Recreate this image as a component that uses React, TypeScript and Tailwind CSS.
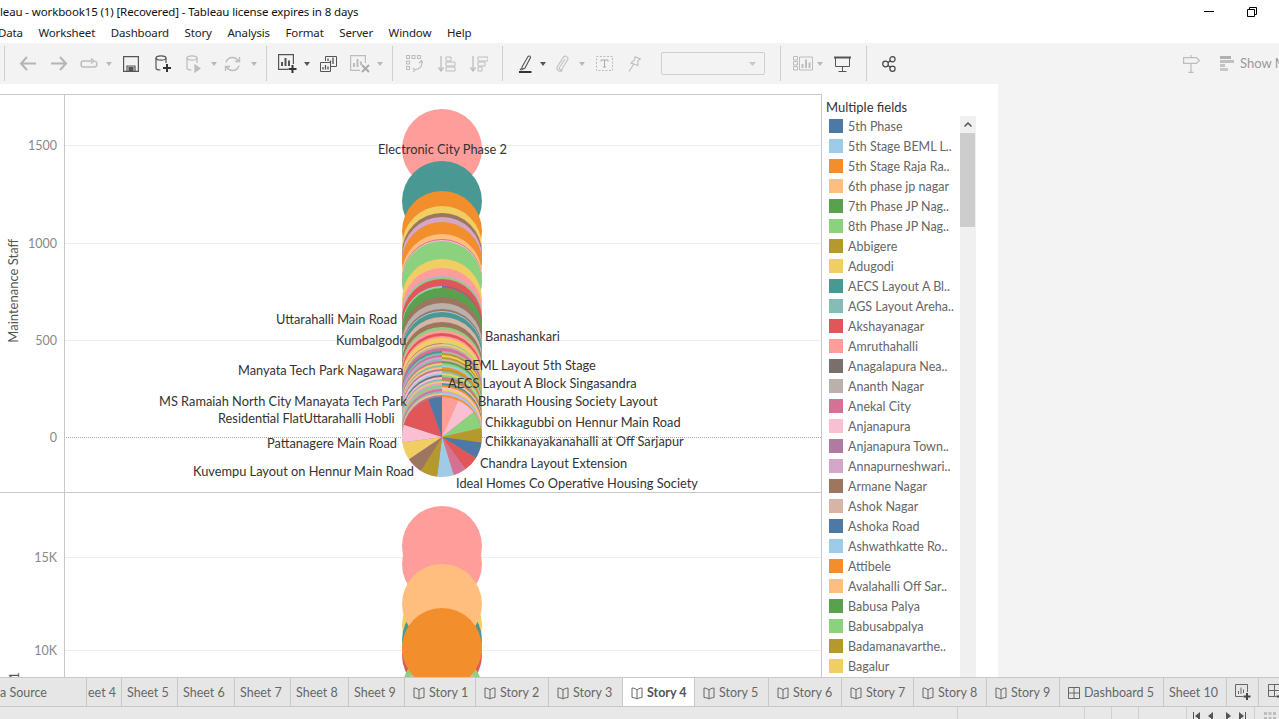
const legend = [
  ["5th Phase", "bg-[#4e79a7]"],
  ["5th Stage BEML L..", "bg-[#a0cbe8]"],
  ["5th Stage Raja Ra..", "bg-[#f28e2b]"],
  ["6th phase jp nagar", "bg-[#ffbe7d]"],
  ["7th Phase JP Nag..", "bg-[#59a14f]"],
  ["8th Phase JP Nag..", "bg-[#8cd17d]"],
  ["Abbigere", "bg-[#b6992d]"],
  ["Adugodi", "bg-[#f1ce63]"],
  ["AECS Layout A Bl..", "bg-[#499894]"],
  ["AGS Layout Areha..", "bg-[#86bcb6]"],
  ["Akshayanagar", "bg-[#e15759]"],
  ["Amruthahalli", "bg-[#ff9d9a]"],
  ["Anagalapura Nea..", "bg-[#79706e]"],
  ["Ananth Nagar", "bg-[#bab0ac]"],
  ["Anekal City", "bg-[#d37295]"],
  ["Anjanapura", "bg-[#fabfd2]"],
  ["Anjanapura Town..", "bg-[#b07aa1]"],
  ["Annapurneshwari..", "bg-[#d4a6c8]"],
  ["Armane Nagar", "bg-[#9d7660]"],
  ["Ashok Nagar", "bg-[#d7b5a6]"],
  ["Ashoka Road", "bg-[#4e79a7]"],
  ["Ashwathkatte Ro..", "bg-[#a0cbe8]"],
  ["Attibele", "bg-[#f28e2b]"],
  ["Avalahalli Off Sar..", "bg-[#ffbe7d]"],
  ["Babusa Palya", "bg-[#59a14f]"],
  ["Babusabpalya", "bg-[#8cd17d]"],
  ["Badamanavarthe..", "bg-[#b6992d]"],
  ["Bagalur", "bg-[#f1ce63]"],
];

const menus = ["Data", "Worksheet", "Dashboard", "Story", "Analysis", "Format", "Server", "Window", "Help"];

const labels = [
  ["Electronic City Phase 2", "left-[378px] top-[46px]"],
  ["Uttarahalli Main Road", "left-[276px] top-[216px]"],
  ["Kumbalgodu", "left-[336px] top-[237px]"],
  ["Banashankari", "left-[485px] top-[233px]"],
  ["BEML Layout 5th Stage", "left-[464px] top-[262px]"],
  ["Manyata Tech Park Nagawara", "left-[238px] top-[267px]"],
  ["AECS Layout A Block Singasandra", "left-[448px] top-[280px]"],
  ["Bharath Housing Society Layout", "left-[478px] top-[298px]"],
  ["MS Ramaiah North City Manayata Tech Park", "left-[159px] top-[298px]"],
  ["Residential FlatUttarahalli Hobli", "left-[218px] top-[315px]"],
  ["Chikkagubbi on Hennur Main Road", "left-[485px] top-[319px]"],
  ["Chikkanayakanahalli at Off Sarjapur", "left-[485px] top-[338px]"],
  ["Pattanagere Main Road", "left-[267px] top-[340px]"],
  ["Chandra Layout Extension", "left-[480px] top-[360px]"],
  ["Kuvempu Layout on Hennur Main Road", "left-[193px] top-[368px]"],
  ["Ideal Homes Co Operative Housing Society", "left-[456px] top-[380px]"],
];

const C = {
  blue: "#4e79a7", sky: "#a0cbe8", orange: "#f28e2b", peach: "#ffbe7d", green: "#59a14f", lime: "#8cd17d",
  olive: "#b6992d", yellow: "#f1ce63", teal: "#499894", aqua: "#86bcb6", red: "#e15759", pink: "#ff9d9a",
  grey: "#79706e", stone: "#bab0ac", mauve: "#d37295", rose: "#fabfd2", plum: "#b07aa1", lilac: "#d4a6c8",
  brown: "#9d7660", tan: "#d7b5a6",
};

// top edge of each bubble, left half colour, right half colour
const pile: [number, string, string?][] = [
  [109, C.pink], [161, C.teal], [191, C.orange], [206, C.yellow], [213, C.brown], [217, C.lilac],
  [222, C.orange], [234, C.peach], [239, C.mauve], [240, C.rose], [241, C.lime], [259, C.yellow],
  [268, C.pink], [275, C.lilac], [277, C.lime], [279, C.red], [284, C.red, C.red], [286, C.sky, C.blue],
  [287, C.lime, C.red], [288, C.green], [297, C.brown], [303, C.stone], [309, C.brown], [311, C.sky],
  [312, C.teal], [317, C.tan], [322, C.brown], [327, C.lime], [330, C.pink], [333, C.red], [336, C.pink],
  [338, C.yellow], [343, C.plum, C.aqua], [344, C.yellow], [346, C.stone], [348, C.mauve], [351, C.teal, C.stone],
  [353, C.aqua, C.olive], [355, C.mauve, C.yellow], [357, C.lilac, C.olive], [359, C.aqua, C.tan], [361, C.mauve, C.green],
  [363, C.yellow, C.lime], [365, C.aqua, C.sky], [367, C.peach, C.orange], [369, C.plum, C.olive], [371, C.rose, C.aqua],
  [373, C.sky, C.yellow], [375, C.grey, C.lime], [377, C.rose, C.mauve], [379, C.aqua, C.olive], [381, C.peach, C.rose],
  [383, C.lilac, C.teal], [385, C.lime, C.orange], [387, C.stone, C.rose], [389, C.mauve, C.yellow], [391, C.aqua, C.lilac],
  [393, C.peach, C.sky], [395, C.plum, C.orange],
];

// final pie, degrees clockwise from 12 o'clock
const slices: [number, number, string][] = [
  [0, 24, C.pink], [24, 52, C.rose], [52, 77, C.lime], [77, 98, C.olive], [98, 122, C.blue], [122, 144, C.red],
  [144, 163, C.mauve], [163, 187, C.sky], [187, 212, C.olive], [212, 236, C.brown], [236, 262, C.yellow],
  [262, 288, C.rose], [288, 340, C.red], [340, 360, C.blue],
];

const pt = (cy: number, deg: number) => {
  const r = (deg * Math.PI) / 180;
  return `${442 + 40 * Math.sin(r)} ${cy - 40 * Math.cos(r)}`;
};

function TopPile() {
  return (
    <svg className="absolute left-0 top-0" width="822" height="397" viewBox="0 95 822 397">
      {pile.map(([top, left, right], i) => {
        const cy = top + 40;
        if (!right || right === left) return <circle key={i} cx="442" cy={cy} r="40" fill={left} />;
        return (
          <g key={i}>
            <path d={`M442 ${cy - 40}A40 40 0 0 0 442 ${cy + 40}Z`} fill={left} />
            <path d={`M442 ${cy - 40}A40 40 0 0 1 442 ${cy + 40}Z`} fill={right} />
          </g>
        );
      })}
      {slices.map(([a, b, c], i) => (
        <path key={i} d={`M442 437L${pt(437, a)}A40 40 0 0 1 ${pt(437, b)}Z`} fill={c} />
      ))}
    </svg>
  );
}

function BottomPile() {
  const circles: [number, string][] = [
    [546, C.pink], [564, C.pink], [625, C.yellow], [640, C.teal], [655, C.red], [690, C.lime], [700, C.tan],
    [604, C.peach], [648, C.orange],
  ];
  return (
    <svg className="absolute left-0 top-0" width="822" height="184" viewBox="0 493 822 184">
      {circles.map(([cy, c], i) => (
        <circle key={i} cx="442" cy={cy} r="40" fill={c} />
      ))}
    </svg>
  );
}

function Sep({ className }: { className: string }) {
  return <div className={`h-[35px] w-px shrink-0 bg-[#cfcfcf] ${className}`} />;
}

function Caret({ className, dark }: { className: string; dark?: boolean }) {
  return (
    <svg className={`shrink-0 ${className}`} width="6" height="4" viewBox="0 0 6 4">
      <path d="M0 0H6L3 4Z" fill={dark ? "#555" : "#b9b9b9"} />
    </svg>
  );
}

function Book() {
  return (
    <svg className="shrink-0" width="12" height="13" viewBox="0 0 12 13" fill="none" stroke="#666" strokeWidth="1">
      <path d="M6 3C5 1.8 3 1.2 1 1V10.5C3 10.7 5 11 6 12C7 11 9 10.7 11 10.5V1C9 1.2 7 1.8 6 3ZM6 3V12" />
    </svg>
  );
}

function DashIcon() {
  return (
    <svg className="shrink-0" width="12" height="12" viewBox="0 0 12 12" fill="none" stroke="#666" strokeWidth="1">
      <path d="M.5.5H11.5V11.5H.5ZM6 .5V11.5M.5 6H11.5" />
    </svg>
  );
}

function Tab({ w, label, kind, active, pad }: { w: string; label: string; kind?: "story" | "dash"; active?: boolean; pad?: string }) {
  return (
    <div
      className={`flex h-full shrink-0 items-center gap-[4px] overflow-hidden whitespace-nowrap border-r border-[#c8c8c8] pt-[2px] text-[12.5px] ${w} ${
        active ? "bg-white font-bold text-[#555]" : "text-[#666]"
      } ${pad ?? (kind ? "pl-[8px]" : "pl-[5px]")}`}
    >
      {kind === "story" && <Book />}
      {kind === "dash" && <DashIcon />}
      <span>{label}</span>
    </div>
  );
}

export default function App() {
  return (
    <div className="flex h-[719px] w-[1279px] flex-col overflow-hidden bg-white font-['Lato',sans-serif] text-[12px]">
      {/* title bar */}
      <div className="flex h-[21px] shrink-0 items-center pt-[2px] font-['Noto_Sans',sans-serif] text-[#111]">
        <span className="text-[11.5px] tracking-[-0.13px]">leau - workbook15 (1) [Recovered] - Tableau license expires in 8 days</span>
        <div className="ml-auto mr-[22px] flex items-center gap-[33px]">
          <div className="h-px w-[10px] bg-black" />
          <svg width="10" height="10" viewBox="0 0 10 10" fill="none" stroke="#000">
            <path d="M.5 2.5H7.5V9.5H.5ZM2.5 2.5V.5H9.5V7.5H7.5" />
          </svg>
        </div>
      </div>

      {/* menu bar */}
      <div className="-ml-[2px] flex h-[22px] shrink-0 items-center gap-[15.6px] pt-[2px] font-['Noto_Sans',sans-serif] text-[11.5px] text-[#222]">
        {menus.map((m) => (
          <span key={m} className="tracking-[-0.15px]">{m}</span>
        ))}
      </div>

      {/* toolbar */}
      <div className="flex h-[41px] shrink-0 items-center overflow-hidden bg-[#f3f3f3]">
        <Sep className="ml-[4px]" />
        <svg className="ml-[14px] shrink-0" width="17" height="15" viewBox="0 0 17 15" fill="none" stroke="#b5b5b5" strokeWidth="2">
          <path d="M17 7.5H2M8 1L2 7.5L8 14" />
        </svg>
        <svg className="ml-[15px] shrink-0" width="17" height="15" viewBox="0 0 17 15" fill="none" stroke="#b5b5b5" strokeWidth="2">
          <path d="M0 7.5H15M9 1L15 7.5L9 14" />
        </svg>
        <svg className="ml-[12px] shrink-0" width="18" height="12" viewBox="0 0 18 12" fill="none" stroke="#bdbdbd" strokeWidth="1.5">
          <path d="M12 3H3C1.5 3 1 4 1 6S1.5 9 3 9H14C16 9 17 8 17 6S16 3.5 15 3.2M11 .5L14 3L11 5.5" />
        </svg>
        <Caret className="ml-[8px]" />
        <svg className="ml-[11px] shrink-0" width="16" height="16" viewBox="0 0 16 16" fill="none" stroke="#555" strokeWidth="1.2">
          <path d="M.6.6H15.4V15.4H.6ZM4 15V10H12V15" />
          <rect x="6" y="11.5" width="4" height="3.5" fill="#555" />
        </svg>
        <svg className="ml-[16px] shrink-0" width="17" height="18" viewBox="0 0 17 18" fill="none" stroke="#555" strokeWidth="1.2">
          <ellipse cx="6" cy="3" rx="5" ry="2.2" />
          <path d="M1 3V13C1 14.5 3 15 5.5 15M11 3V8" />
          <path d="M12 9V17M8 13H16" stroke="#333" strokeWidth="2" />
        </svg>
        <svg className="ml-[14px] shrink-0" width="15" height="18" viewBox="0 0 15 18" fill="none" stroke="#bdbdbd" strokeWidth="1.2">
          <ellipse cx="6" cy="3" rx="5" ry="2.2" />
          <path d="M1 3V13C1 14.5 3 15 5.5 15M11 3V8" />
          <path d="M9 10L14 13.5L9 17Z" fill="#bdbdbd" />
        </svg>
        <Caret className="ml-[10px]" />
        <svg className="ml-[7px] shrink-0" width="17" height="16" viewBox="0 0 17 16" fill="none" stroke="#bdbdbd" strokeWidth="1.4">
          <path d="M2 6.5C3 3 5.5 1.5 8.5 1.5C11 1.5 13 2.8 14.5 5M15 9.5C14 13 11.5 14.5 8.5 14.5C6 14.5 4 13.2 2.5 11M15.5 1V5.5H11M1.5 15V10.5H6" />
        </svg>
        <Caret className="ml-[10px]" />
        <Sep className="ml-[9px]" />
        <svg className="ml-[11px] shrink-0" width="19" height="19" viewBox="0 0 19 19" fill="none" stroke="#555" strokeWidth="1.2">
          <path d="M10 15.4H.6V.6H15.4V10" />
          <path d="M4 12V8M7.5 12V4M11 12V6.5" strokeWidth="2" />
          <path d="M14.5 11V19M10.5 15H18.5" stroke="#333" strokeWidth="2" />
        </svg>
        <Caret className="ml-[7px]" dark />
        <svg className="ml-[10px] shrink-0" width="17" height="16" viewBox="0 0 17 16" fill="none" stroke="#555" strokeWidth="1">
          <path d="M5.5 5V.5H16.5V10.5H11" />
          <path d="M.5 6.5H10.5V15.5H.5Z" />
          <path d="M8 5V2.5M10.5 7V4.5M13 8V1.5M3 13.5V11M5.5 13.5V9M8 13.5V10.5" strokeWidth="1.3" />
        </svg>
        <svg className="ml-[13px] shrink-0" width="20" height="18" viewBox="0 0 20 18" fill="none" stroke="#bdbdbd" strokeWidth="1.2">
          <path d="M10 15.4H.6V.6H15.4V8" />
          <path d="M4 12V8M7.5 12V4M11 10V6.5" strokeWidth="2" />
          <path d="M12 10L19 17M19 10L12 17" stroke="#aaa" strokeWidth="2" />
        </svg>
        <Caret className="ml-[7px]" />
        <Sep className="ml-[9px]" />
        <svg className="ml-[13px] shrink-0" width="17" height="17" viewBox="0 0 17 17" fill="none" stroke="#bdbdbd" strokeWidth="1.1">
          <path d="M.5.5H3.5V3.5H.5ZM6 .5H9V3.5H6ZM11.5.5H14.5V3.5H11.5ZM.5 6H3.5V9H.5ZM.5 11.5H3.5V14.5H.5Z" />
          <path d="M15.5 7C16.5 10.5 14 14.5 9 14.5M7 13L9 15L7 17M13 8L15.5 5.5L17 8" />
        </svg>
        <svg className="ml-[15px] shrink-0" width="18" height="16" viewBox="0 0 18 16" fill="none" stroke="#bdbdbd" strokeWidth="1.3">
          <path d="M3 0V14M.5 11.5L3 15L5.5 11.5" />
          <path d="M8 1H13V5H8ZM8 6H17V10H8ZM8 11H17V15H8Z" strokeWidth="1" />
        </svg>
        <svg className="ml-[14px] shrink-0" width="18" height="16" viewBox="0 0 18 16" fill="none" stroke="#bdbdbd" strokeWidth="1.3">
          <path d="M3 0V14M.5 11.5L3 15L5.5 11.5" />
          <path d="M8 1H18V5H8ZM8 6H15V10H8ZM8 11H12V15H8Z" strokeWidth="1" />
        </svg>
        <Sep className="ml-[14px]" />
        <svg className="ml-[16px] shrink-0" width="13" height="18" viewBox="0 0 13 18" fill="none" stroke="#555" strokeWidth="1.1">
          <path d="M3 12L9 1.5C10 .5 11.5 1 11.5 2.5L6 13L3 14.5Z" />
          <path d="M2.5 13.5L1 15" />
          <path d="M0 17H12.5" strokeWidth="2" stroke="#333" />
        </svg>
        <Caret className="ml-[8px]" dark />
        <svg className="ml-[10px] shrink-0" width="13" height="17" viewBox="0 0 13 17" fill="none" stroke="#c4c4c4" strokeWidth="1.2">
          <path d="M9 4L3.5 12.5C2.5 14.5 5 15.5 6 14L11.5 5C13 2 9.5 0 7.5 2L1.5 11.5C-.5 15 4 18 6.5 15" />
        </svg>
        <Caret className="ml-[10px]" />
        <svg className="ml-[11px] shrink-0" width="17" height="15" viewBox="0 0 17 15" fill="none" stroke="#bdbdbd">
          <path d="M.5.5H16.5V14.5H.5Z" strokeDasharray="2 1.5" />
          <path d="M5 4H12M8.5 4V11M7 11H10M5 4V5.5M12 4V5.5" stroke="#aaa" />
        </svg>
        <svg className="ml-[15px] shrink-0" width="13" height="16" viewBox="0 0 13 16" fill="none" stroke="#bdbdbd" strokeWidth="1.1">
          <path d="M7 .8L12.5 3L10 4.5L10 9.5L3 7L6.5 4ZM5.5 8.5L1 15.5" />
        </svg>
        <div className="ml-[20px] flex h-[23px] w-[104px] shrink-0 items-center justify-end rounded-[2px] border border-[#cfcfcf] pr-[8px]">
          <svg width="7" height="4" viewBox="0 0 7 4"><path d="M0 0H7L3.5 4Z" fill="#c8c8c8" /></svg>
        </div>
        <Sep className="ml-[15px]" />
        <svg className="ml-[12px] shrink-0" width="20" height="15" viewBox="0 0 20 15" fill="none" stroke="#bdbdbd">
          <path d="M.5.5H4.5V4H.5ZM.5 5.5H4.5V9H.5ZM.5 10.5H4.5V14H.5ZM6.5 1H19.5V14H6.5Z" />
          <path d="M9.5 12V8M13 12V3.5M16.5 12V6.5" strokeWidth="2" />
        </svg>
        <Caret className="ml-[4px]" />
        <svg className="ml-[11px] shrink-0" width="17" height="16" viewBox="0 0 17 16" fill="none" stroke="#555">
          <path d="M0 1.5H17" strokeWidth="2" />
          <path d="M1.5 2V10.5H15.5V2M8.5 10.5V15M4.5 15.5H12.5" />
        </svg>
        <Sep className="ml-[15px]" />
        <svg className="ml-[15px] shrink-0" width="14" height="16" viewBox="0 0 14 16" fill="none" stroke="#444" strokeWidth="1.2">
          <circle cx="3.5" cy="8" r="2.8" />
          <circle cx="10.5" cy="3.2" r="2.6" />
          <circle cx="10.5" cy="12.8" r="2.6" />
          <path d="M6 6.4L8.3 4.7M6 9.6L8.3 11.3" />
        </svg>
        <svg className="ml-[287px] shrink-0" width="17" height="18" viewBox="0 0 17 18" fill="none" stroke="#bcbcbc" strokeWidth="1.2">
          <path d="M.6 2.6H13.5L16.4 5.5L13.5 8.4H.6ZM8 0V2.6M8 8.4V17.5M5.5 17.4H10.5" />
        </svg>
        <div className="ml-[20px] flex shrink-0 flex-col gap-[1px]">
          <div className="h-[3px] w-[11px] bg-[#b0b0b0]" />
          <div className="h-[3px] w-[14px] bg-[#c0c0c0]" />
          <div className="h-[3px] w-[5px] bg-[#c4c4c4]" />
          <div className="h-[3px] w-[8px] bg-[#c8c8c8]" />
        </div>
        <span className="ml-[6px] shrink-0 whitespace-nowrap text-[13px] text-[#999]">Show Me</span>
      </div>

      {/* workspace */}
      <div className="flex h-[593px] shrink-0 overflow-hidden">
        <div className="flex w-[998px] shrink-0 pt-[10px]">
          <div className="flex w-[822px] shrink-0 flex-col border-r border-t border-[#c8c8c8]">
            <div className="relative h-[398px] shrink-0 overflow-hidden border-b border-[#c8c8c8]">
              <div className="absolute left-[64px] right-0 top-[50px] h-px bg-[#eeeeee]" />
              <div className="absolute left-[64px] right-0 top-[148px] h-px bg-[#eeeeee]" />
              <div className="absolute left-[64px] right-0 top-[245px] h-px bg-[#eeeeee]" />
              <div className="absolute left-[64px] right-0 top-[342px] border-t border-dotted border-[#aaaaaa]" />
              <div className="absolute bottom-0 left-[64px] top-0 w-px bg-[#c8c8c8]" />
              <TopPile />
              <span className="absolute right-[764px] top-[42px] text-[12.5px] text-[#888]">1500</span>
              <span className="absolute right-[764px] top-[140px] text-[12.5px] text-[#888]">1000</span>
              <span className="absolute right-[764px] top-[237px] text-[12.5px] text-[#888]">500</span>
              <span className="absolute right-[764px] top-[334px] text-[12.5px] text-[#888]">0</span>
              <span className="absolute left-[-46px] top-[186px] w-[120px] -rotate-90 whitespace-nowrap text-center text-[13px] text-[#555]">Maintenance Staff</span>
              {labels.map(([text, pos]) => (
                <span key={text} className={`absolute whitespace-nowrap text-[12.8px] leading-[16px] text-[#333] ${pos}`}>{text}</span>
              ))}
            </div>
            <div className="relative flex-1 overflow-hidden">
              <div className="absolute left-[64px] right-0 top-[64px] h-px bg-[#eeeeee]" />
              <div className="absolute left-[64px] right-0 top-[157px] h-px bg-[#eeeeee]" />
              <div className="absolute bottom-0 left-[64px] top-0 w-px bg-[#c8c8c8]" />
              <BottomPile />
              <span className="absolute right-[764px] top-[56px] text-[12.5px] text-[#888]">15K</span>
              <span className="absolute right-[764px] top-[149px] text-[12.5px] text-[#888]">10K</span>
              <span className="absolute left-[11px] top-[173px] -rotate-90 text-[13px] text-[#555]">1</span>
            </div>
          </div>
          <div className="relative flex flex-1 flex-col overflow-hidden pl-[7px]">
            <div className="-ml-[3px] mt-[3px] h-[19px] shrink-0 text-[13px] leading-[20px] text-[#333]">Multiple fields</div>
            {legend.map(([name, color]) => (
              <div key={name} className="flex h-[20px] shrink-0 items-center">
                <div className={`h-[14px] w-[14px] shrink-0 ${color}`} />
                <span className="ml-[5px] mt-[3px] whitespace-nowrap text-[12.5px] text-[#666]">{name}</span>
              </div>
            ))}
            <div className="absolute bottom-0 left-[138px] top-[22px] w-[16px] bg-[#f0f0f0]">
              <svg className="absolute left-[4px] top-[6px]" width="8" height="5" viewBox="0 0 8 5" fill="none" stroke="#555" strokeWidth="1.5">
                <path d="M.5 4.5L4 1L7.5 4.5" />
              </svg>
              <div className="absolute left-0 top-[17px] h-[94px] w-[15px] bg-[#cdcdcd]" />
            </div>
          </div>
        </div>
        <div className="flex-1 bg-[#f3f3f3]" />
      </div>

      {/* sheet tabs */}
      <div className="flex h-[30px] shrink-0 border-y border-[#c8c8c8] bg-[#e6e6e6]">
        <Tab w="w-[87px]" label="a Source" pad="pl-0" />
        <Tab w="w-[35px]" label="eet 4" pad="pl-[1px]" />
        <Tab w="w-[56px]" label="Sheet 5" />
        <Tab w="w-[57px]" label="Sheet 6" />
        <Tab w="w-[56px]" label="Sheet 7" />
        <Tab w="w-[58px]" label="Sheet 8" />
        <Tab w="w-[56px]" label="Sheet 9" />
        <Tab w="w-[71px]" label="Story 1" kind="story" />
        <Tab w="w-[73px]" label="Story 2" kind="story" />
        <Tab w="w-[74px]" label="Story 3" kind="story" />
        <Tab w="w-[72px]" label="Story 4" kind="story" active />
        <Tab w="w-[74px]" label="Story 5" kind="story" />
        <Tab w="w-[73px]" label="Story 6" kind="story" />
        <Tab w="w-[72px]" label="Story 7" kind="story" />
        <Tab w="w-[73px]" label="Story 8" kind="story" />
        <Tab w="w-[73px]" label="Story 9" kind="story" />
        <Tab w="w-[104px]" label="Dashboard 5" kind="dash" />
        <Tab w="w-[63px]" label="Sheet 10" />
        <div className="flex h-full w-[32px] shrink-0 items-center justify-center border-r border-[#c8c8c8]">
          <svg width="16" height="16" viewBox="0 0 16 16" fill="none" stroke="#666">
            <path d="M8 12.5H.5V.5H12.5V8" />
            <path d="M3.5 10V7M6 10V3.5M8.5 9V5.5" />
            <path d="M12 9V16M8.5 12.5H15.5" stroke="#444" strokeWidth="2" />
          </svg>
        </div>
        <div className="flex h-full flex-1 items-center pl-[9px]">
          <svg width="16" height="16" viewBox="0 0 16 16" fill="none" stroke="#666">
            <path d="M8 12.5H.5V.5H12.5V8M.5 6.5H12.5M6.5.5V12.5" />
            <path d="M12 9V16M8.5 12.5H15.5" stroke="#444" strokeWidth="2" />
          </svg>
        </div>
      </div>

      {/* status bar */}
      <div className="flex h-[12px] flex-1 items-center overflow-hidden bg-[#e8e8e8]">
        <div className="ml-[957px] h-full w-px bg-[#d0d0d0]" />
        <div className="ml-[126px] h-full w-px bg-[#d0d0d0]" />
        <div className="ml-[26px] h-full w-px bg-[#d0d0d0]" />
        <div className="ml-[26px] h-full w-px bg-[#d0d0d0]" />
        <div className="ml-[47px] h-full w-px bg-[#d0d0d0]" />
        <svg className="ml-[5px] mt-[6px] shrink-0" width="60" height="8" viewBox="0 0 60 8" fill="#555">
          <path d="M1 0H2V8H1ZM8 0V8L3 4ZM21 0V8L16 4ZM34 0L39 4L34 8ZM47 0L52 4L47 8ZM53 0H54V8H53Z" />
        </svg>
        <div className="ml-[2px] h-full w-px bg-[#d0d0d0]" />
        <svg className="ml-[9px] mt-[6px] shrink-0" width="12" height="8" viewBox="0 0 12 8" fill="#bdbdbd">
          <path d="M0 0H3V3H0ZM4.5 0H7.5V3H4.5ZM9 0H12V3H9ZM0 5H3V8H0ZM4.5 5H7.5V8H4.5ZM9 5H12V8H9Z" />
        </svg>
      </div>
    </div>
  );
}
